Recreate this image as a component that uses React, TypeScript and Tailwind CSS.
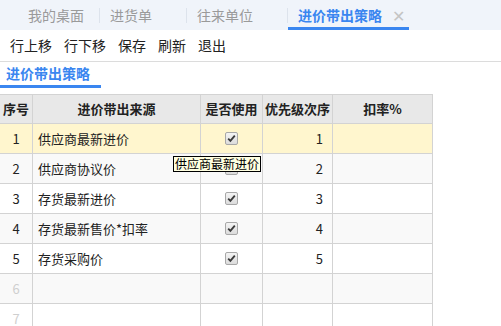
import type { ReactNode } from "react";

const FONT = { fontFamily: '"Noto Sans CJK SC", "Noto Sans", sans-serif' };

const ROWS = [
  { no: 1, source: "供应商最新进价", used: true, order: 1 },
  { no: 2, source: "供应商协议价", used: true, order: 2 },
  { no: 3, source: "存货最新进价", used: true, order: 3 },
  { no: 4, source: "存货最新售价*扣率", used: true, order: 4 },
  { no: 5, source: "存货采购价", used: true, order: 5 },
  { no: 6, source: "", used: false, order: null },
  { no: 7, source: "", used: false, order: null },
];

function CheckBox() {
  return (
    <span className="flex h-[13px] w-[13px] items-center justify-center rounded-[2px] border border-[#a8a8a8] bg-gradient-to-b from-[#f4f4f4] to-[#dcdcdc]">
      <svg width="9" height="9" viewBox="0 0 9 9">
        <path d="M1.2 4.6 L3.4 6.9 L7.8 1.6" fill="none" stroke="#3a3a3a" strokeWidth="1.8" />
      </svg>
    </span>
  );
}

function Cell({ children, className = "" }: { children?: ReactNode; className?: string }) {
  return <div className={`flex items-center border-r border-b border-[#d3d3d3] ${className}`}>{children}</div>;
}

function Sep() {
  return <div className="h-[15px] w-px bg-[#dde3ec]" />;
}

export default function App() {
  return (
    <div className="relative h-[326px] w-[501px] overflow-hidden bg-white" style={FONT}>
      {/* top tabs */}
      <div className="flex h-[30px] items-center bg-[#f0f4fa] text-[14px] text-[#9a9a9a]">
        <div className="w-[99px] pl-[28px]">我的桌面</div>
        <Sep />
        <div className="w-[86px] pl-[10px]">进货单</div>
        <Sep />
        <div className="w-[100px] pl-[10px]">往来单位</div>
        <Sep />
        <div className="relative flex h-full w-[121px] items-center pl-[10px]">
          <span className="font-bold text-[#3a86f0]">进价带出策略</span>
          <span className="ml-[10px] text-[16px] leading-none text-[#c4c4c4]">✕</span>
          <div className="absolute bottom-0 left-0 h-[3px] w-[121px] bg-[#3a86f0]" />
        </div>
      </div>

      {/* toolbar */}
      <div className="flex h-[32px] items-center gap-[12px] border-b border-[#dcdcdc] pl-[10px] text-[14px] text-[#222]">
        <span>行上移</span>
        <span>行下移</span>
        <span>保存</span>
        <span>刷新</span>
        <span>退出</span>
      </div>

      {/* sub tab */}
      <div className="mb-[6px] flex h-[26px]">
        <div className="flex w-[101px] flex-col">
          <div className="flex flex-1 items-center pl-[6px] text-[14px] font-bold text-[#3a86f0]">进价带出策略</div>
          <div className="h-[3px] bg-[#3a86f0]" />
        </div>
      </div>

      {/* grid */}
      <div className="grid w-[433px] grid-cols-[33px_168px_62px_70px_100px] border-t border-[#d3d3d3] text-[13px] text-[#222]">
        <Cell className="h-[29px] justify-center bg-[#e8e8e8] font-bold">序号</Cell>
        <Cell className="h-[29px] justify-center bg-[#e8e8e8] font-bold">进价带出来源</Cell>
        <Cell className="h-[29px] justify-center bg-[#e8e8e8] font-bold">是否使用</Cell>
        <Cell className="h-[29px] justify-center bg-[#e8e8e8] font-bold">优先级次序</Cell>
        <Cell className="h-[29px] justify-center bg-[#e8e8e8] font-bold">扣率%</Cell>
        {ROWS.map((r, i) => {
          const bg = i === 0 ? "bg-[#fff6ce]" : i % 2 === 1 ? "bg-[#f9f9f9]" : "bg-white";
          return [
            <Cell key={`a${r.no}`} className={`h-[30px] justify-center ${bg} ${r.order ? "" : "text-[#cfcfcf]"}`}>{r.no}</Cell>,
            <Cell key={`b${r.no}`} className={`h-[30px] pl-[5px] ${bg}`}>{r.source}</Cell>,
            <Cell key={`c${r.no}`} className={`h-[30px] justify-center ${bg}`}>{r.used && <CheckBox />}</Cell>,
            <Cell key={`d${r.no}`} className={`h-[30px] justify-end pr-[9px] ${bg}`}>{r.order}</Cell>,
            <Cell key={`e${r.no}`} className={`h-[30px] ${bg}`} />,
          ];
        })}
      </div>

      {/* tooltip */}
      <div className="absolute left-[173px] top-[156px] flex h-[16px] items-center border border-black bg-[#ffffe1] px-px text-[12px] leading-none text-black">
        供应商最新进价
      </div>
    </div>
  );
}
